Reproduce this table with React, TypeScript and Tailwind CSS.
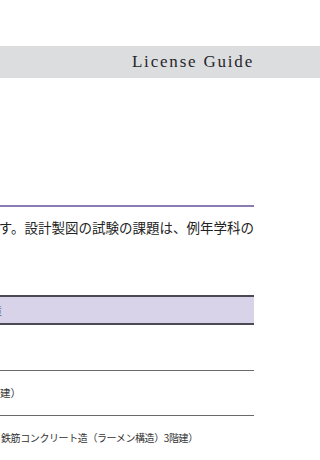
const jp = "font-['Noto_Sans_CJK_JP','Noto_Sans',sans-serif]";

// Each row's text sits in a box whose right edge is fixed; longer text spills off to the left.
function RightEnd({ width, className, children }: { width: string; className?: string; children: React.ReactNode }) {
  return (
    <div className={`flex justify-end whitespace-nowrap ${width} ${className ?? ""}`}>
      <span className="shrink-0">{children}</span>
    </div>
  );
}

export default function App() {
  return (
    <div className={`min-h-[460px] w-[320px] overflow-hidden bg-white ${jp}`}>
      <div className="h-[46px]" />

      <header className="flex h-[32px] items-center bg-[#dcdddf]">
        <div className="flex w-[254px] justify-end">
          <span className="font-['Liberation_Serif',serif] text-[17px] tracking-[1.8px] text-[#26262b]">License Guide</span>
        </div>
      </header>

      <div className="h-[127px]" />

      <div className="h-[2px] w-[254px] bg-[#8b7db3]" />

      <RightEnd width="w-[254px]" className="mt-[9px] text-[13.5px] leading-[22px] text-[#222]">
        建築士の試験は、学科の試験と設計製図の試験に分かれています。設計製図の試験の課題は、例年学科の
      </RightEnd>

      <div className="h-[57px]" />

      <table className="w-[254px] border-collapse text-[10px] text-[#333]">
        <thead>
          <tr className="h-[28px] border-y-2 border-[#4a4a52] bg-[#d9d3ea]">
            <th className="p-0 text-left font-normal">
              <RightEnd width="w-[2px]" className="text-[12px] text-[#777]">課題の建築物の構造</RightEnd>
            </th>
          </tr>
        </thead>
        <tbody>
          <tr className="h-[46px] border-b border-[#6a6a6a]">
            <td className="p-0" />
          </tr>
          <tr className="h-[45px] border-b border-[#6a6a6a]">
            <td className="p-0">
              <RightEnd width="w-[21px]" className="text-[10.5px]">木造（在来軸組工法）2階建）</RightEnd>
            </td>
          </tr>
          <tr className="h-[45px]">
            <td className="p-0 pl-[1px] tracking-[-0.4px]">鉄筋コンクリート造（ラーメン構造）3階建）</td>
          </tr>
        </tbody>
      </table>
    </div>
  );
}
